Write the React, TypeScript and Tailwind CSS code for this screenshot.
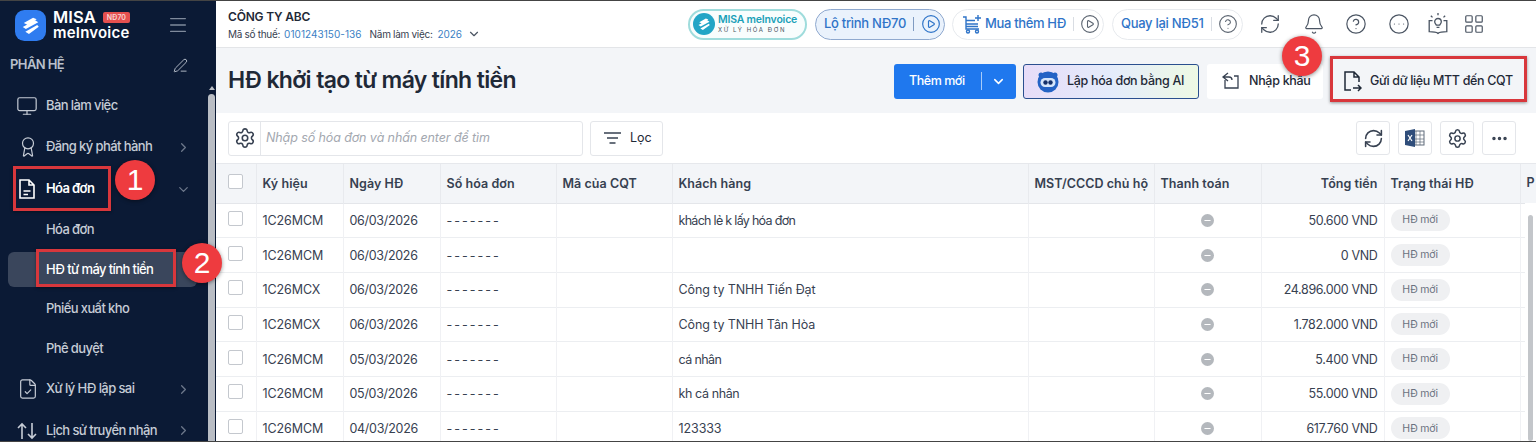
import React from "react";
import {
  Monitor, ChevronRight, ChevronDown, Menu, PenLine, FileCheck, RefreshCw, Bell, CircleHelp,
  CircleEllipsis, LayoutGrid, CirclePlay, Settings, Ellipsis, Minus, Award,
} from "lucide-react";

const Logo = ({ size = 30, bg = "#2f7cf0", rx = 9 }: { size?: number; bg?: string; rx?: number }) => (
  <svg width={size} height={size} viewBox="0 0 30 30" className="shrink-0">
    <rect width="30" height="30" rx={rx} fill={bg} />
    <path d="M8.500 12.500 17.500 7.500l3.500 1.500-9 5.200zM7.500 16.500 19.500 10l3 1.800-12 6.700zM10 21l11.500-6.500 1.500 1.800-9.500 7z" fill="#fff" />
  </svg>
);

const Badge = ({ n, className }: { n: number; className: string }) => (
  <div className={"absolute z-20 w-[40px] h-[40px] rounded-full bg-[#ee3b3f] text-white flex items-center justify-center text-[30px] leading-none shadow-[0_1px_4px_rgba(0,0,0,0.45)] font-['Liberation_Sans',sans-serif] " + className}>{n}</div>
);

const RedBox = ({ className }: { className: string }) => (
  <div className={"absolute z-10 border-[3px] border-[#d8373c] shadow-[0_1px_3px_rgba(0,0,0,0.4)] pointer-events-none " + className} />
);

const NavItem = ({ icon, label, chevron, h = "h-[41px]" }: { icon?: React.ReactNode; label: string; chevron?: "r" | "d"; h?: string }) => (
  <div className={"flex items-center pl-[17px] pr-[17px] text-[#c6ccd6] shrink-0 " + h}>
    <div className="w-[29px] shrink-0 flex items-center">{icon}</div>
    <span className="flex-1 text-[13px] font-medium tracking-[-0.6px]">{label}</span>
    {chevron === "r" && <ChevronRight size={15} className="text-[#6d788b]" />}
    {chevron === "d" && <ChevronDown size={15} className="text-[#6d788b]" />}
  </div>
);

const Sidebar = () => (
  <aside className="relative w-[208px] shrink-0 bg-[#0b1a35] flex flex-col overflow-hidden">
    <div className="flex items-center h-[47px] shrink-0 pl-[15px] pr-[19px] pt-[1px]">
      <Logo size={31} />
      <div className="ml-[7px] flex flex-col text-white">
        <div className="flex items-center gap-[7px] h-[16px]">
          <span className="text-[16.500px] font-semibold tracking-[0.1px] leading-[16px]">MISA</span>
          <span className="bg-[#e5504f] text-[7px] px-[4px] rounded-[2px] leading-[11px] font-semibold text-[#f8d5d5]">NĐ70</span>
        </div>
        <span className="text-[15px] font-semibold leading-[16px] tracking-[0.2px]">meInvoice</span>
      </div>
      <Menu size={22} strokeWidth={1.5} className="ml-auto text-[#7f8a9c]" />
    </div>
    <div className="flex items-center justify-between h-[34px] shrink-0 pl-[10px] pr-[20px] text-[#b9c0cc]">
      <span className="text-[13px] font-semibold tracking-[-0.6px]">PHÂN HỆ</span>
      <PenLine size={15} strokeWidth={1.5} />
    </div>
    <div className="flex flex-col mt-[3px]">
      <NavItem label="Bàn làm việc" icon={<Monitor size={22} strokeWidth={1.3} className="-ml-[1px]" />} />
      <NavItem label="Đăng ký phát hành" chevron="r" icon={<Award size={22} strokeWidth={1.3} />} h="h-[42px]" />
      <div className="relative shrink-0">
        <RedBox className="left-[13px] top-[-2px] w-[98px] h-[45px]" />
        <Badge n={1} className="left-[115px] top-[-8px]" />
        <div className="flex items-center h-[42px] pl-[17px] pr-[17px] text-white">
          <div className="w-[29px] shrink-0">
            <svg width="20" height="22" viewBox="0 0 20 22" fill="none" stroke="currentColor" strokeWidth="1.6">
              <path d="M3 2h9l5 5v13H3zM12 2v5h5M6.500 13h7M6.500 16.500h4.500" />
            </svg>
          </div>
          <span className="flex-1 text-[13px] font-semibold tracking-[-0.6px]">Hóa đơn</span>
          <ChevronDown size={15} className="text-[#6d788b]" />
        </div>
      </div>
      <NavItem label="Hóa đơn" h="h-[40px]" />
      <div className="relative h-[39px] shrink-0 ml-[8px] mr-[11px] py-[2px]">
        <div className="h-full rounded-[6px] bg-[#3a465c] flex items-center pl-[38px] text-white text-[13px] font-medium tracking-[-0.6px]">HĐ từ máy tính tiền</div>
        <RedBox className="left-[28px] top-[-1px] w-[140px] h-[38px]" />
      </div>
      <NavItem label="Phiếu xuất kho" h="h-[40px]" />
      <NavItem label="Phê duyệt" h="h-[39px]" />
      <NavItem label="Xử lý HĐ lập sai" chevron="r" h="h-[42px]" icon={<FileCheck size={22} strokeWidth={1.3} />} />
      <NavItem
        label="Lịch sử truyền nhận"
        chevron="r"
        icon={
          <svg width="20" height="18" viewBox="0 0 20 18" fill="none" stroke="currentColor" strokeWidth="1.600">
            <path d="M5 17V2M1 6l4-4 4 4M15 1v15M11 12l4 4 4-4" />
          </svg>
        }
      />
    </div>
  </aside>
);

const TopPill = ({ children, className }: { children: React.ReactNode; className: string }) => (
  <div className={"h-[31px] rounded-full flex items-center shrink-0 " + className}>{children}</div>
);

const TopBar = () => (
  <header className="relative h-[47px] shrink-0 bg-white border-b border-[#e3e5e8] flex items-center pl-[12px] pr-[51px]">
    <div className="flex flex-col">
      <span className="text-[12px] font-semibold text-[#1f2937] leading-[15px] tracking-[-0.2px] mt-[1px]">CÔNG TY ABC</span>
      <div className="flex items-center text-[10px] leading-[14px] mt-[3px] text-[#374151] tracking-[-0.3px]">
        Mã số thuế:<span className="text-[#3b7fc4] ml-[4px] mr-[8px] tracking-[0.05px]">0101243150-136</span>
        Năm làm việc:<span className="text-[#3b7fc4] ml-[5px] tracking-[-0.1px]">2026</span>
        <ChevronDown size={14} className="ml-[5px] text-[#4b5563]" />
      </div>
    </div>
    <div className="ml-auto flex items-center">
      <TopPill className="w-[119px] border-2 border-[#9fdcdc] bg-[#f8fdfd] pl-[3px] gap-[3px]">
        <Logo size={22} bg="#22a5c6" rx={15} />
        <div className="flex flex-col leading-none">
          <span className="text-[10.500px] font-semibold text-[#1aa0b8] tracking-[-0.2px]">MISA meInvoice</span>
          <span className="text-[6px] text-[#4b5563] tracking-[1.600px] mt-[2px]">XỬ LÝ HÓA ĐƠN</span>
        </div>
      </TopPill>
      <TopPill className="ml-[8px] w-[130px] border border-[#8fa9cf] bg-[#eaf2fc] pl-[8px] text-[#2f74c8] text-[13px] font-medium tracking-[-0.3px]">
        Lộ trình NĐ70
        <span className="w-px h-[14px] bg-[#7f9bc2] ml-[7px] mr-[7px]" />
        <CirclePlay size={20} strokeWidth={1.4} />
      </TopPill>
      <TopPill className="ml-[7px] w-[152px] border border-[#e7eaee] pl-[9px] text-[#2f74c8] text-[13px] font-medium tracking-[-0.35px]">
        <svg width="20" height="20" viewBox="0 0 20 20" fill="none" stroke="currentColor" strokeWidth="1.4" className="mr-[3px] shrink-0">
          <path d="M1 3h3v12h13M4 6.500h9M4 10h12M4 12.500h12" />
          <circle cx="6" cy="17.500" r="1.500" />
          <circle cx="15" cy="17.500" r="1.500" />
          <path d="M16 1v6M13 4h6" />
        </svg>
        Mua thêm HĐ
        <span className="w-px h-[14px] bg-[#d9dde3] ml-[7px] mr-[6px]" />
        <CirclePlay size={20} strokeWidth={1.3} className="text-[#5b6470]" />
      </TopPill>
      <TopPill className="ml-[8px] w-[131px] border border-[#e7eaee] pl-[8px] text-[#2f74c8] text-[13px] font-medium tracking-[-0.3px]">
        Quay lại NĐ51
        <span className="w-px h-[14px] bg-[#d9dde3] ml-[7px] mr-[6px]" />
        <CircleHelp size={20} strokeWidth={1.3} className="text-[#5b6470]" />
      </TopPill>
      <div className="flex items-center ml-[16px] text-[#4b5563]">
        <RefreshCw size={22} strokeWidth={1.4} />
        <Bell size={22} strokeWidth={1.3} className="ml-[22px]" />
        <CircleHelp size={22} strokeWidth={1.3} className="ml-[20px]" />
        <CircleEllipsis size={22} strokeWidth={1.3} className="ml-[21px]" />
        <svg width="22" height="22" viewBox="0 0 20 20" fill="none" stroke="currentColor" strokeWidth="1.200" className="ml-[17px]">
          <path d="M5 7H2v10c3 0 6 0 8 1.500 2-1.500 5-1.500 8-1.500V7h-3M10 0v2M3.500 2.500 5 4M16.500 2.500 15 4" />
          <path d="M7 8a3 3 0 1 1 6 0c0 1.500-1 2-1.500 3h-3C8 10 7 9.500 7 8zM8.700 13h2.600" />
        </svg>
        <LayoutGrid size={22} strokeWidth={1.3} className="ml-[14px]" />
      </div>
    </div>
  </header>
);

const PageHead = () => (
  <div className="relative h-[65px] shrink-0 bg-[#f3f5f8] flex items-center pl-[12px] pr-[9px]">
    <h1 className="text-[23px] font-semibold text-[#1f2937] tracking-[-0.65px]">HĐ khởi tạo từ máy tính tiền</h1>
    <div className="ml-auto flex items-center pt-[1px]">
      <div className="w-[122px] h-[35px] bg-[#1f78ee] rounded-[3px] text-white text-[12.500px] font-medium flex items-center pl-[15px] tracking-[-0.45px]">
        Thêm mới
        <span className="w-px h-[18px] bg-[#a7cbf8] ml-[16px] mr-[9px]" />
        <ChevronDown size={15} strokeWidth={2.4} />
      </div>
      <div className="ml-[7px] w-[176px] h-[35px] rounded-[3px] border border-[#2a4f8f] bg-gradient-to-r from-[#e7dcf8] via-[#e4ecfb] to-[#eef9e4] flex items-center pl-[12px] text-[#1f2937] text-[12.500px] font-medium tracking-[-0.3px]">
        <svg width="24" height="24" viewBox="0 0 24 24" className="mr-[7px] shrink-0">
          <circle cx="5" cy="6" r="2.500" fill="#2463c5" />
          <circle cx="19" cy="6" r="2.500" fill="#2463c5" />
          <circle cx="12" cy="13" r="10.500" fill="#2463c5" />
          <rect x="4.500" y="9" width="15" height="9" rx="4.500" fill="#d6e6fb" />
          <circle cx="9.500" cy="13.500" r="2.200" fill="#14306a" />
          <circle cx="14.500" cy="13.500" r="2.200" fill="#14306a" />
        </svg>
        Lập hóa đơn bằng AI
      </div>
      <div className="ml-[8px] w-[116px] h-[35px] rounded-[3px] bg-white flex items-center pl-[13px] text-[#1f2937] text-[12.500px] font-medium tracking-[-0.3px]">
        <svg width="20" height="20" viewBox="0 0 20 20" fill="none" stroke="#374151" strokeWidth="1.3" className="mr-[9px]">
          <path d="M5 9v8h13V5h-4M8 2 3 6l5 4M3 6h6c2 0 3 1.500 3 3" />
        </svg>
        Nhập khẩu
      </div>
      <div className="relative ml-[7px] w-[197px] h-[35px] flex items-center pl-[12px] text-[#1f2937] text-[12.500px] font-medium tracking-[-0.35px]">
        <RedBox className="inset-x-0 top-[-8px] bottom-[-3px]" />
        <svg width="20" height="24" viewBox="0 0 20 24" fill="none" stroke="#1f2937" strokeWidth="1.5" className="mr-[8px]">
          <path d="M9 21H3V3h9l5 5v5M12 3v5h5M11 19h8M16 16l3 3-3 3" />
        </svg>
        Gửi dữ liệu MTT đến CQT
      </div>
    </div>
    <Badge n={3} className="right-[214px] top-[-12px]" />
  </div>
);

const IconBtn = ({ children }: { children: React.ReactNode }) => (
  <div className="w-[34px] h-[34px] bg-white border border-[#e4e6ea] rounded-[3px] flex items-center justify-center text-[#374151]">{children}</div>
);

const Toolbar = () => (
  <div className="h-[50px] shrink-0 bg-white flex items-center pl-[12px] pr-[20px]">
    <div className="w-[355px] h-[35px] border border-[#e4e6ea] rounded-[3px] flex items-center">
      <div className="w-[32px] h-full border-r border-[#e4e6ea] flex items-center justify-center text-[#374151]">
        <Settings size={22} strokeWidth={1.7} />
      </div>
      <span className="pl-[5px] text-[12.500px] italic text-[#a3a8b0] tracking-[-0.1px]">Nhập số hóa đơn và nhấn enter để tìm</span>
    </div>
    <div className="ml-[7px] w-[73px] h-[35px] border border-[#e4e6ea] rounded-[3px] flex items-center pl-[13px] text-[#1f2937] text-[12.500px]">
      <svg width="18" height="14" viewBox="0 0 18 14" stroke="#374151" strokeWidth="1.500" className="mr-[8px]"><path d="M0 2h17M3 7h11M5.500 12h6" /></svg>
      Lọc
    </div>
    <div className="ml-auto flex items-center gap-[8px]">
      <IconBtn><RefreshCw size={21} strokeWidth={1.8} /></IconBtn>
      <IconBtn>
        <svg width="20" height="18" viewBox="0 0 20 18">
          <rect x="8" y="2" width="11" height="14" fill="#fff" stroke="#5f6b7a" />
          <path d="M11 2v14M15 2v14M8 6h11M8 10h11M8 13h11" stroke="#5f6b7a" strokeWidth=".7" />
          <path d="M0 2l10-2v18L0 16z" fill="#2f4d7a" />
          <path d="M3 6l4 6M7 6l-4 6" stroke="#fff" strokeWidth="1.200" />
        </svg>
      </IconBtn>
      <IconBtn><Settings size={21} strokeWidth={1.7} /></IconBtn>
      <IconBtn><Ellipsis size={19} strokeWidth={2.4} /></IconBtn>
    </div>
  </div>
);

const cols = [40, 87, 97, 116, 116, 356, 126, 107, 123, 136, 32];
const rows = [
  { k: "1C26MCM", d: "06/03/2026", c: "khách lẻ k lấy hóa đơn", t: "tracking-[-0.7px]", m: "50.600 VND" },
  { k: "1C26MCM", d: "06/03/2026", c: "", t: "", m: "0 VND" },
  { k: "1C26MCX", d: "06/03/2026", c: "Công ty TNHH Tiến Đạt", t: "tracking-[-0.1px]", m: "24.896.000 VND" },
  { k: "1C26MCX", d: "06/03/2026", c: "Công ty TNHH Tân Hòa", t: "tracking-[-0.1px]", m: "1.782.000 VND" },
  { k: "1C26MCM", d: "05/03/2026", c: "cá nhân", t: "tracking-[-0.6px]", m: "5.400 VND" },
  { k: "1C26MCM", d: "05/03/2026", c: "kh cá nhân", t: "tracking-[-0.4px]", m: "55.000 VND" },
  { k: "1C26MCM", d: "04/03/2026", c: "123333", t: "tracking-[-0.1px]", m: "617.760 VND" },
];
const heads = ["Ký hiệu", "Ngày HĐ", "Số hóa đơn", "Mã của CQT", "Khách hàng", "MST/CCCD chủ hộ", "Thanh toán"];
const th = "border-r border-[#e8eaee] px-[6px] pt-[2px] text-left font-semibold tracking-[0.05px] whitespace-nowrap";
const td = "border-r border-[#f0f1f4] px-[6px] pt-[2px]";

const Check = () => <div className="w-[15px] h-[15px] mx-auto border border-[#c4c8ce] rounded-[2px] bg-white -translate-y-[2px]" />;

const DataTable = () => (
  <div className="relative flex-1 overflow-hidden bg-white border-t border-[#e6e8ec]">
    <table className="table-fixed border-collapse w-[1336px] text-[12.500px] text-[#374151]">
      <colgroup>{cols.map((w, i) => <col key={i} style={{ width: w }} />)}</colgroup>
      <thead>
        <tr className="h-[39px] bg-[#f3f5f8] text-[#374151] border-b border-[#e4e6ea]">
          <th className="border-r border-[#e8eaee]"><Check /></th>
          {heads.map((h) => <th key={h} className={th}>{h}</th>)}
          <th className={th + " text-right"}>Tổng tiền</th>
          <th className={th}>Trạng thái HĐ</th>
          <th className="text-left font-semibold px-[6px]">P</th>
        </tr>
      </thead>
      <tbody>
        {rows.map((r) => (
          <tr key={r.k + r.d + r.m} className="h-[34.700px] border-b border-[#eceef1]">
            <td className="border-r border-[#f0f1f4]"><Check /></td>
            <td className={td + " tracking-[-0.1px]"}>{r.k}</td>
            <td className={td + " tracking-[-0.3px]"}>{r.d}</td>
            <td className={td}><span className="tracking-[2px]">-------</span></td>
            <td className={td}></td>
            <td className={td + " " + r.t}>{r.c}</td>
            <td className={td}></td>
            <td className="border-r border-[#f0f1f4]">
              <span className="mx-auto w-[13px] h-[13px] rounded-full bg-[#b4b8bd] flex items-center justify-center text-white">
                <Minus size={9} strokeWidth={3} />
              </span>
            </td>
            <td className={td + " text-right tracking-[-0.35px]"}>{r.m}</td>
            <td className="border-r border-[#f0f1f4] px-[6px]">
              <span className="inline-flex items-center justify-center w-[59px] h-[22px] rounded-full bg-[#eff0f2] text-[10.500px] text-[#6b7280] tracking-[-0.2px]">HĐ mới</span>
            </td>
            <td></td>
          </tr>
        ))}
      </tbody>
    </table>
    <div className="absolute right-0 top-[39px] bottom-0 w-[11px] bg-white flex flex-col items-center pt-[12px]">
      <div className="w-[5px] flex-1 rounded-full bg-[#c3c6ca]" />
    </div>
  </div>
);

export default function App() {
  return (
    <div className="relative w-[1536px] h-[442px] overflow-hidden flex border-y border-[#444] font-['Inter',sans-serif] bg-white">
      <Sidebar />
      <div className="w-[8px] shrink-0 bg-[#0b1a35] flex flex-col items-start pt-[85px]">
        <div className="w-0 h-0 ml-[1px] mb-[4px] border-x-[3px] border-x-transparent border-b-[4px] border-b-[#b9bdc4]" />
        <div className="w-[7px] flex-1 rounded-t-full bg-[#b9bdc4]" />
      </div>
      <main className="flex-1 min-w-0 flex flex-col overflow-hidden">
        <TopBar />
        <PageHead />
        <Toolbar />
        <DataTable />
      </main>
      <Badge n={2} className="left-[182px] top-[242px]" />
    </div>
  );
}
